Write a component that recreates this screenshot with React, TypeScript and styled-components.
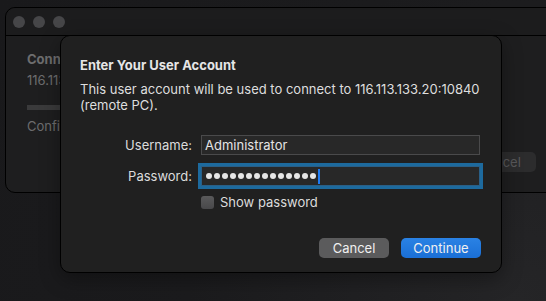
import styled, { createGlobalStyle } from "styled-components";

const GlobalStyle = createGlobalStyle`
    html, body {
        margin: 0;
        padding: 0;
        background: #1a1a1c;
    }

    * {
        box-sizing: border-box;
    }
`;

const Desktop = styled.div`
    position: relative;
    width: 546px;
    height: 301px;
    overflow: hidden;
    background: radial-gradient(circle at 95% 100%, #252527 0%, #1b1b1d 55%, #19191b 100%);
    font-family: Inter, "Helvetica Neue", "Liberation Sans", sans-serif;
    -webkit-font-smoothing: antialiased;
`;

const BackWindow = styled.div`
    position: absolute;
    left: 5px;
    top: 7px;
    width: 580px;
    height: 186px;
    border: 1px solid #000;
    border-radius: 10px;
    background: #1e1e1f;
    display: flex;
    flex-direction: column;
`;

const TitleBar = styled.div`
    height: 28px;
    display: flex;
    align-items: center;
    gap: 8px;
    padding-left: 7px;
    border-bottom: 1px solid #000;
    background: #1c1c1d;
    border-radius: 10px 10px 0 0;
`;

const Light = styled.span`
    width: 12px;
    height: 12px;
    border-radius: 50%;
    background: #464648;
`;

const BackBody = styled.div`
    flex: 1;
    position: relative;
    padding: 15px 0 0 21px;
    color: #6d6d6e;
    font-size: 13px;
`;

/* the part of the window that is not hidden behind the sheet */
const BackColumn = styled.div`
    width: 34px;
    overflow: hidden;
    white-space: nowrap;
    display: flex;
    flex-direction: column;
`;

const BackTitle = styled.div`
    font-weight: 700;
    line-height: 16px;
`;

const BackText = styled.div`
    margin-top: 5px;
    line-height: 16px;
`;

const BackProgress = styled.div`
    margin-top: 17px;
    margin-left: -2px;
    width: 160px;
    height: 5px;
    border-radius: 3px;
    background: #3a3a3b;
`;

const BackStatus = styled.div`
    margin-top: 8px;
    line-height: 16px;
`;

const BackButton = styled.div`
    position: absolute;
    top: 116px;
    left: 457px;
    width: 73px;
    height: 20px;
    border-radius: 5px;
    background: #2c2c2d;
    color: #58585a;
    font-size: 13px;
    display: flex;
    align-items: center;
    justify-content: center;
`;

const Sheet = styled.div`
    position: absolute;
    left: 60px;
    top: 35px;
    width: 442px;
    height: 238px;
    border: 1px solid #000;
    border-radius: 10px;
    background: #202020;
    padding: 21px 20px 0 19px;
    display: flex;
    flex-direction: column;
    color: #dcdcdc;
    font-size: 13px;
    box-shadow: 0 6px 20px rgba(0, 0, 0, 0.35);
`;

const Heading = styled.div`
    font-weight: 700;
    line-height: 16px;
    color: #e6e6e6;
`;

const Description = styled.p`
    margin: 8px 0 0;
    line-height: 16px;
    color: #dedede;
`;

const Form = styled.div`
    margin-top: 22px;
    display: grid;
    grid-template-columns: 112px 279px;
    column-gap: 9px;
    row-gap: 11px;
    align-items: center;
`;

const Label = styled.label`
    text-align: right;
    color: #dcdcdc;
    line-height: 16px;
`;

const Field = styled.div<{ $focused?: boolean }>`
    height: 20px;
    display: flex;
    align-items: center;
    padding-left: 3px;
    background: #282828;
    border: 1px solid ${(p) => (p.$focused ? "#2a5f86" : "#4a4a4b")};
    box-shadow: ${(p) => (p.$focused ? "0 0 0 3px #1d6a9e" : "none")};
    color: #e4e4e4;
    line-height: 16px;
`;

const Dots = styled.span`
    display: flex;
    gap: 2px;
    padding-left: 1px;
`;

const Dot = styled.span`
    width: 6px;
    height: 6px;
    border-radius: 50%;
    background: #e6e6e6;
`;

const Caret = styled.span`
    width: 2px;
    height: 15px;
    margin-left: 2px;
    background: #1e7bf2;
`;

const CheckRow = styled.div`
    grid-column: 2;
    display: flex;
    align-items: center;
    gap: 6px;
    margin-top: -3px;
`;

const Checkbox = styled.span`
    width: 13px;
    height: 13px;
    border-radius: 3px;
    background: linear-gradient(#5a5a5b, #48484a);
`;

const Actions = styled.div`
    margin-top: auto;
    margin-bottom: 14px;
    display: flex;
    justify-content: flex-end;
    gap: 12px;
`;

const Button = styled.button<{ $primary?: boolean }>`
    height: 20px;
    min-width: ${(p) => (p.$primary ? "80px" : "70px")};
    border: none;
    border-radius: 5px;
    padding: 0 12px;
    font-family: inherit;
    font-size: 13px;
    color: #f0f0f0;
    background: ${(p) =>
        p.$primary ? "linear-gradient(#2a82e4, #1a6fd6)" : "#5b5b5c"};
`;

const passwordLength = 14;

export default function App() {
    return (
        <>
            <GlobalStyle />
            <Desktop>
                <BackWindow>
                    <TitleBar>
                        <Light />
                        <Light />
                        <Light />
                    </TitleBar>
                    <BackBody>
                        <BackColumn>
                            <BackTitle>Connecting</BackTitle>
                            <BackText>116.113.133.20:10840</BackText>
                            <BackProgress />
                            <BackStatus>Configuring</BackStatus>
                        </BackColumn>
                        <BackButton>Cancel</BackButton>
                    </BackBody>
                </BackWindow>

                <Sheet>
                    <Heading>Enter Your User Account</Heading>
                    <Description>
                        This user account will be used to connect to 116.113.133.20:10840
                        <br />
                        (remote PC).
                    </Description>
                    <Form>
                        <Label>Username:</Label>
                        <Field>Administrator</Field>
                        <Label>Password:</Label>
                        <Field $focused>
                            <Dots>
                                {Array.from({ length: passwordLength }, (_, i) => (
                                    <Dot key={i} />
                                ))}
                            </Dots>
                            <Caret />
                        </Field>
                        <CheckRow>
                            <Checkbox />
                            <span>Show password</span>
                        </CheckRow>
                    </Form>
                    <Actions>
                        <Button>Cancel</Button>
                        <Button $primary>Continue</Button>
                    </Actions>
                </Sheet>
            </Desktop>
        </>
    );
}
